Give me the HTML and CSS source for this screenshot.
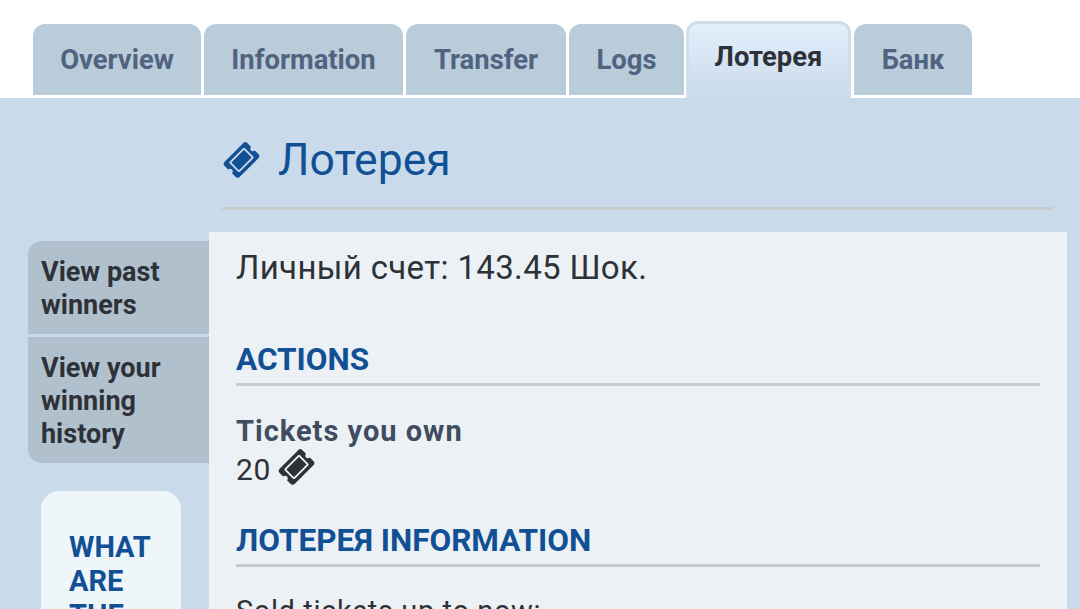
FILE: index.html
```html
<!DOCTYPE html>
<html lang="en">
<head>
<meta charset="UTF-8" />
<title>Лотерея</title>
<link rel="stylesheet" href="styles.css">
</head>
<body>
<nav class="tabs">
  <a class="tab tab-overview">Overview</a>
  <a class="tab tab-information">Information</a>
  <a class="tab tab-transfer">Transfer</a>
  <a class="tab tab-logs">Logs</a>
  <a class="tab tab-active">Лотерея</a>
  <a class="tab tab-bank">Банк</a>
</nav>

<div class="panel">
  <div class="page-head">
    <svg class="ticket ticket-blue" viewBox="-60 -60 696 632"><path transform="rotate(-45 288 256)" d="M128 160h320v192H128V160zm400 96c0 26.51 21.49 48 48 48v96c0 26.51-21.49 48-48 48H48c-26.51 0-48-21.49-48-48v-96c26.51 0 48-21.49 48-48s-21.49-48-48-48v-96c0-26.51 21.49-48 48-48h480c26.51 0 48 21.49 48 48v96c-26.51 0-48 21.49-48 48zm-48-104c0-13.255-10.745-24-24-24H120c-13.255 0-24 10.745-24 24v208c0 13.255 10.745 24 24 24h336c13.255 0 24-10.745 24-24V152z"/></svg>
    <h1>Лотерея</h1>
  </div>

  <div class="columns">
    <aside class="side">
      <ul class="side-menu">
        <li>View past winners</li>
        <li>View your winning history</li>
      </ul>
      <div class="side-box">
        <h3>WHAT ARE THE TICKETS?</h3>
      </div>
    </aside>

    <main class="content">
      <p class="balance">Личный счет: 143.45 Шок.</p>

      <h2>ACTIONS</h2>
      <div class="field-label">Tickets you own</div>
      <div class="field-value">20
        <svg class="ticket ticket-dark" viewBox="-60 -60 696 632"><path transform="rotate(-45 288 256)" d="M128 160h320v192H128V160zm400 96c0 26.51 21.49 48 48 48v96c0 26.51-21.49 48-48 48H48c-26.51 0-48-21.49-48-48v-96c26.51 0 48-21.49 48-48s-21.49-48-48-48v-96c0-26.51 21.49-48 48-48h480c26.51 0 48 21.49 48 48v96c-26.51 0-48 21.49-48 48zm-48-104c0-13.255-10.745-24-24-24H120c-13.255 0-24 10.745-24 24v208c0 13.255 10.745 24 24 24h336c13.255 0 24-10.745 24-24V152z"/></svg>
      </div>

      <h2 class="info-title">ЛОТЕРЕЯ INFORMATION</h2>
      <p class="sold">Sold tickets up to now:</p>
    </main>
  </div>
</div>
</body>
</html>
```

FILE: styles.css
```css
* {
  box-sizing: border-box;
}
html, body {
  height: 609px;
  overflow: hidden;
}
body {
  margin: 0;
  background: #fff;
  color: #2e3238;
  font-family: Roboto, sans-serif;
}

.tabs {
  display: flex;
  align-items: flex-end;
  height: 98px;
  padding-left: 33px;
}
.tab {
  height: 71px;
  margin: 0 3px 3px 0;
  border-radius: 12px 12px 0 0;
  background: #b9ccd9;
  color: #506380;
  font-size: 27.4px;
  font-weight: 700;
  line-height: 72px;
  text-align: center;
}
.tab-overview { width: 168px; }
.tab-information { width: 199px; }
.tab-transfer { width: 160px; }
.tab-logs { width: 115px; margin-right: 2px; }
.tab-active {
  width: 165px;
  height: 77px;
  margin: 0 3px 0 0;
  border: 3px solid #cfdeea;
  border-bottom: 0;
  background: linear-gradient(#e2f0fd, #c9daea);
  color: #2e3238;
  line-height: 66px;
}
.tab-bank { width: 118px; margin-right: 0; }

.panel {
  height: 511px;
  background: #c9daea;
}
.page-head {
  display: flex;
  align-items: center;
  gap: 17px;
  height: 112px;
  margin: 0 27px 0 222px;
  border-bottom: 3px solid #c8cccf;
  padding-top: 14px;
}
.page-head h1 {
  margin: 0;
  color: #125095;
  font-size: 44.5px;
  font-weight: 400;
}
.ticket {
  display: inline-block;
}
.ticket-blue {
  width: 39px;
  height: 36px;
  fill: #125095;
}
.ticket-dark {
  width: 39px;
  height: 36px;
  margin-left: -2px;
  vertical-align: -5px;
  fill: #2e3238;
}

.columns {
  display: flex;
  align-items: flex-start;
  margin-top: 22px;
  padding: 0 13px 0 28px;
}
.side {
  flex: none;
  width: 181px;
  margin-top: 9px;
}
.side-menu {
  margin: 0;
  padding: 0;
  list-style: none;
  border-radius: 14px 0 0 14px;
  overflow: hidden;
}
.side-menu li {
  padding: 15px 13px 12px;
  background: #b0c1cd;
  color: #2e3238;
  font-size: 27px;
  font-weight: 700;
  line-height: 33px;
}
.side-menu li + li {
  margin-top: 3px;
}
.side-box {
  width: 140px;
  margin: 28px 0 0 13px;
  padding: 39px 28px;
  border-radius: 18px;
  background: #eef6fa;
}
.side-box h3 {
  margin: 0;
  color: #125095;
  font-size: 29px;
  font-weight: 700;
  line-height: 34px;
}

.content {
  flex: 1;
  height: 400px;
  padding: 16px 27px;
  background: #ebf1f4;
  font-size: 30px;
}
.balance {
  margin: 0 0 55px;
  font-size: 33px;
  letter-spacing: 0.35px;
  line-height: 40px;
}
.content h2 {
  margin: 0;
  padding-bottom: 6px;
  border-bottom: 3px solid #c8cccf;
  color: #125095;
  font-size: 31.5px;
  font-weight: 700;
  line-height: 34px;
}
.field-label {
  margin-top: 26px;
  color: #424c60;
  font-size: 29px;
  font-weight: 700;
  letter-spacing: 1px;
  line-height: 38px;
}
.field-value {
  margin-top: -1px;
  line-height: 38px;
  letter-spacing: 0.6px;
}
.content .info-title {
  margin-top: 35px;
}
.sold {
  margin: 24px 0 0;
  font-size: 29px;
  letter-spacing: 0.6px;
  line-height: 40px;
}
```
